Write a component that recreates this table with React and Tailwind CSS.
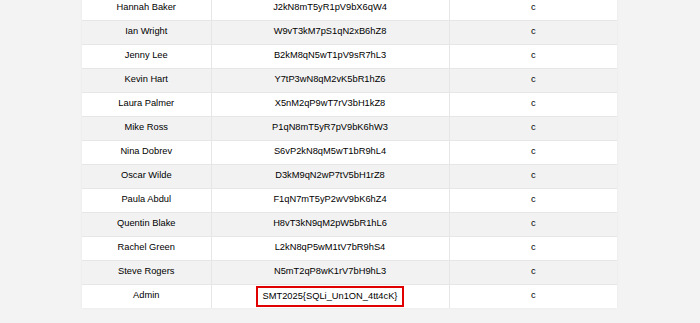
const rows = [
  ["Hannah Baker", "J2kN8mT5yR1pV9bX6qW4"],
  ["Ian Wright", "W9vT3kM7pS1qN2xB6hZ8"],
  ["Jenny Lee", "B2kM8qN5wT1pV9sR7hL3"],
  ["Kevin Hart", "Y7tP3wN8qM2vK5bR1hZ6"],
  ["Laura Palmer", "X5nM2qP9wT7rV3bH1kZ8"],
  ["Mike Ross", "P1qN8mT5yR7pV9bK6hW3"],
  ["Nina Dobrev", "S6vP2kN8qM5wT1bR9hL4"],
  ["Oscar Wilde", "D3kM9qN2wP7tV5bH1rZ8"],
  ["Paula Abdul", "F1qN7mT5yP2wV9bK6hZ4"],
  ["Quentin Blake", "H8vT3kN9qM2pW5bR1hL6"],
  ["Rachel Green", "L2kN8qP5wM1tV7bR9hS4"],
  ["Steve Rogers", "N5mT2qP8wK1rV7bH9hL3"],
];

export default function App() {
  return (
    <div className="w-[700px] h-[323px] bg-[#f3f3f3] overflow-hidden" style={{ fontFamily: '"Liberation Sans", Arial, sans-serif' }}>
      <div className="pl-[82px] -mt-[4px]">
        <table className="w-[535px] border-collapse bg-white text-[9.3px] text-black shadow-[0_0_2px_rgba(0,0,0,0.06)]">
          <tbody>
            {rows.map(([name, pass], i) => (
              <tr key={name} className={`h-[24px] border-b border-[#e6e6e6] ${i % 2 === 1 ? "bg-[#f2f2f2]" : "bg-white"}`}>
                <td className="w-[129px] text-center border-r border-[#e6e6e6] p-0">{name}</td>
                <td className="w-[238px] text-center border-r border-[#e6e6e6] p-0">{pass}</td>
                <td className="text-center p-0">c</td>
              </tr>
            ))}
            <tr className="h-[24px] bg-white">
              <td className="text-center border-r border-[#e6e6e6] p-0">Admin</td>
              <td className="text-center border-r border-[#e6e6e6] p-0">
                <span className="inline-block border-2 border-[#e00000] px-[5px] leading-[17px]">SMT2025{"{SQLi_Un1ON_4tt4cK}"}</span>
              </td>
              <td className="text-center p-0">c</td>
            </tr>
          </tbody>
        </table>
      </div>
    </div>
  );
}
